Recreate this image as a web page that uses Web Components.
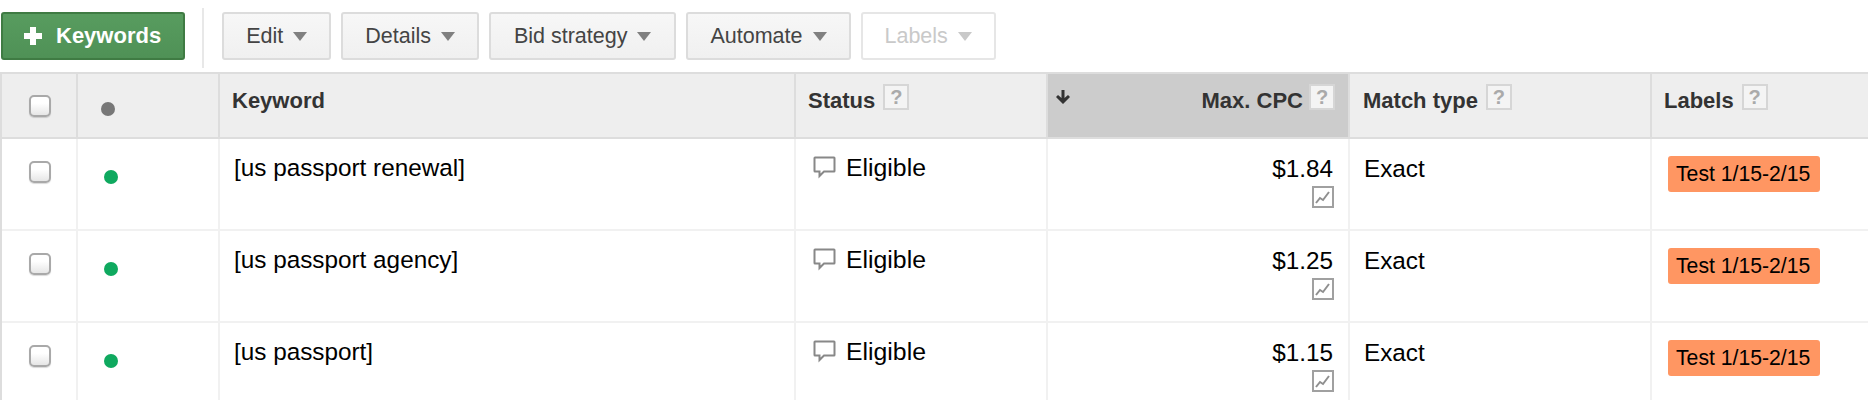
<!DOCTYPE html>
<html lang="en">
<head>
<meta charset="utf-8">
<title>Keywords</title>
<style>
  html, body { margin: 0; height: 400px; overflow: hidden; background: #fff; }
  body { font-family: "Liberation Sans", Arial, sans-serif; }
</style>
</head>
<body>
<keyword-toolbar>
  <tool-button kind="add">Keywords</tool-button>
  <tool-separator></tool-separator>
  <tool-button>Edit</tool-button>
  <tool-button>Details</tool-button>
  <tool-button style="--pad: 23px">Bid strategy</tool-button>
  <tool-button>Automate</tool-button>
  <tool-button disabled>Labels</tool-button>
</keyword-toolbar>
<keyword-table>
  <keyword-head></keyword-head>
  <keyword-row keyword="[us passport renewal]" cpc="$1.84"></keyword-row>
  <keyword-row keyword="[us passport agency]" cpc="$1.25"></keyword-row>
  <keyword-row keyword="[us passport]" cpc="$1.15"></keyword-row>
</keyword-table>

<script>
  const COLUMNS = "76px 142px 576px 252px 302px 302px 1fr";

  class KeywordToolbar extends HTMLElement {
    constructor() {
      super();
      this.attachShadow({ mode: "open" });
      this.shadowRoot.innerHTML = `
        <style>
          :host {
            display: flex;
            align-items: flex-start;
            gap: 10px;
            height: 72px;
            box-sizing: border-box;
            padding: 12px 0 0 1px;
          }
        </style>
        <slot></slot>
      `;
    }
  }

  class ToolSeparator extends HTMLElement {
    constructor() {
      super();
      this.attachShadow({ mode: "open" });
      this.shadowRoot.innerHTML = `
        <style>
          :host {
            display: block;
            width: 2px;
            height: 60px;
            margin: -4px 8px 0 7px;
            background: #e8e8e8;
          }
        </style>
      `;
    }
  }

  class ToolButton extends HTMLElement {
    constructor() {
      super();
      this.attachShadow({ mode: "open" });
      const add = this.getAttribute("kind") === "add";
      const icon = add
        ? `<svg class="plus" width="18" height="18" viewBox="0 0 18 18"><path d="M6 0h6v6h6v6h-6v6H6v-6H0V6h6z" fill="#fff"/></svg>`
        : "";
      const arrow = add
        ? ""
        : `<svg class="arrow" width="14" height="9" viewBox="0 0 14 9"><path d="M0 0h14L7 9z" fill="currentColor"/></svg>`;
      this.shadowRoot.innerHTML = `
        <style>
          :host {
            display: flex;
            align-items: center;
            height: 48px;
            box-sizing: border-box;
            padding: 0 var(--pad, 22px);
            gap: 10px;
            border: 2px solid #dcdcdc;
            border-radius: 3px;
            background: linear-gradient(#f7f7f7, #f0f0f0);
            color: #444;
            font-size: 21.5px;
          }
          :host([kind="add"]) {
            padding: 0 22px 0 21px;
            gap: 14px;
            border-color: #3f7b43;
            background: linear-gradient(#589c5f, #4f9156);
            color: #fff;
            font-size: 22px;
            font-weight: bold;
          }
          :host([disabled]) {
            border-color: #e6e6e6;
            background: #fff;
            color: #c9c9c9;
          }
          .arrow { color: #808080; }
          :host([disabled]) .arrow { color: #c9c9c9; }
        </style>
        ${icon}<slot></slot>${arrow}
      `;
    }
  }

  class KeywordTable extends HTMLElement {
    constructor() {
      super();
      this.attachShadow({ mode: "open" });
      this.shadowRoot.innerHTML = `
        <style>
          :host {
            display: block;
            border-top: 2px solid #ddd;
            border-left: 2px solid #ddd;
          }
        </style>
        <slot></slot>
      `;
    }
  }

  class HelpMark extends HTMLElement {
    constructor() {
      super();
      this.attachShadow({ mode: "open" });
      this.shadowRoot.innerHTML = `
        <style>
          :host {
            display: inline-flex;
            align-items: center;
            justify-content: center;
            box-sizing: border-box;
            width: 26px;
            height: 26px;
            border: 2px solid #d6d6d6;
            background: #f4f4f4;
            color: #aaa;
            font-size: 20px;
            line-height: 22px;
            font-weight: bold;
          }
        </style>
        ?
      `;
    }
  }

  class TickBox extends HTMLElement {
    constructor() {
      super();
      this.attachShadow({ mode: "open" });
      this.shadowRoot.innerHTML = `
        <style>
          :host {
            display: block;
            box-sizing: border-box;
            width: 22px;
            height: 22px;
            border: 2px solid #a9a9a9;
            border-radius: 5px;
            background: linear-gradient(#fff 35%, #e6e6e6);
            box-shadow: 0 1px 1px rgba(0,0,0,.15);
          }
        </style>
      `;
    }
  }

  class KeywordHead extends HTMLElement {
    constructor() {
      super();
      this.attachShadow({ mode: "open" });
      this.shadowRoot.innerHTML = `
        <style>
          :host {
            display: grid;
            grid-template-columns: ${COLUMNS};
            height: 65px;
            box-sizing: border-box;
            border-bottom: 2px solid #ddd;
            background: #eee;
            color: #333;
            font-size: 22px;
            font-weight: bold;
          }
          .cell {
            box-sizing: border-box;
            border-right: 2px solid #ddd;
            display: flex;
            align-items: flex-start;
            gap: 8px;
            padding: 10px 0 0 11px;
          }
          .cell:last-child { border-right: 0; }
          .title { line-height: 26px; padding-top: 4px; }
          .check { padding: 21px 0 0 27px; }
          .dot-cell { padding: 28px 0 0 23px; }
          .dot { width: 14px; height: 14px; border-radius: 50%; background: #777; }
          .sorted {
            background: #ccc;
            justify-content: flex-end;
            gap: 6px;
            padding-right: 13px;
            position: relative;
          }
          .sort-arrow { position: absolute; left: 7px; top: 16px; }
          .keyword { padding-left: 12px; }
          .status { padding-left: 12px; }
          .match { padding-left: 13px; }
          .labels { padding-left: 12px; }
        </style>
        <div class="cell check"><tick-box></tick-box></div>
        <div class="cell dot-cell"><div class="dot"></div></div>
        <div class="cell keyword"><span class="title">Keyword</span></div>
        <div class="cell status"><span class="title">Status</span><help-mark></help-mark></div>
        <div class="cell sorted">
          <svg class="sort-arrow" width="16" height="14" viewBox="0 0 16 14"><path d="M6.500 0h3v8l3.500-3 2 2-7 7-7-7 2-2 3.500 3z" fill="#333"/></svg>
          <span class="title">Max. CPC</span><help-mark></help-mark>
        </div>
        <div class="cell match"><span class="title">Match type</span><help-mark></help-mark></div>
        <div class="cell labels"><span class="title">Labels</span><help-mark></help-mark></div>
      `;
    }
  }

  class KeywordRow extends HTMLElement {
    constructor() {
      super();
      this.attachShadow({ mode: "open" });
      const keyword = this.getAttribute("keyword");
      const cpc = this.getAttribute("cpc");
      this.shadowRoot.innerHTML = `
        <style>
          :host {
            display: grid;
            grid-template-columns: ${COLUMNS};
            height: 92px;
            box-sizing: border-box;
            border-bottom: 2px solid #f1f1f1;
            color: #000;
            font-size: 24.300px;
          }
          .cell {
            box-sizing: border-box;
            border-right: 2px solid #f1f1f1;
            padding: 15px 0 0 14px;
            line-height: 28px;
          }
          .cell:last-child { border-right: 0; }
          .check { padding: 22px 0 0 27px; }
          .dot-cell { padding: 31px 0 0 26px; }
          .dot { width: 14px; height: 14px; border-radius: 50%; background: #0fa95f; }
          .status { display: flex; gap: 10px; padding-left: 17px; font-size: 24.800px; }
          .status svg { margin-top: 2px; }
          .cpc {
            display: flex;
            flex-direction: column;
            align-items: flex-end;
            gap: 3px;
            padding: 16px 15px 0 0;
          }
          .cpc svg { margin-right: -1px; }
          .match { padding-left: 14px; padding-top: 16px; }
          .label-cell { padding: 17px 0 0 16px; }
          .label {
            display: inline-block;
            width: 152px;
            box-sizing: border-box;
            padding: 0 8px;
            height: 36px;
            line-height: 36px;
            background: #ff9662;
            border-radius: 3px;
            font-size: 21.200px;
            white-space: nowrap;
          }
        </style>
        <div class="cell check"><tick-box></tick-box></div>
        <div class="cell dot-cell"><div class="dot"></div></div>
        <div class="cell">${keyword}</div>
        <div class="cell status">
          <svg width="23" height="23" viewBox="0 0 23 23" fill="none"><path d="M2 1.500h19a.5.5 0 0 1 .5.5v13a.5.5 0 0 1-.5.5H11l-4.500 4.500v-4.500H2a.5.5 0 0 1-.5-.5V2a.5.5 0 0 1 .5-.5z" stroke="#888" stroke-width="2"/></svg>
          <span>Eligible</span>
        </div>
        <div class="cell cpc">
          <span>${cpc}</span>
          <svg width="22" height="22" viewBox="0 0 22 22" fill="none"><rect x="1" y="1" width="20" height="20" stroke="#a0a0a0" stroke-width="2"/><path d="M4 17l4-5 3 2 6-8" stroke="#8f8f8f" stroke-width="2"/></svg>
        </div>
        <div class="cell match">Exact</div>
        <div class="cell label-cell"><span class="label">Test 1/15-2/15</span></div>
      `;
    }
  }

  customElements.define("keyword-toolbar", KeywordToolbar);
  customElements.define("tool-separator", ToolSeparator);
  customElements.define("tool-button", ToolButton);
  customElements.define("keyword-table", KeywordTable);
  customElements.define("help-mark", HelpMark);
  customElements.define("tick-box", TickBox);
  customElements.define("keyword-head", KeywordHead);
  customElements.define("keyword-row", KeywordRow);
</script>
</body>
</html>
